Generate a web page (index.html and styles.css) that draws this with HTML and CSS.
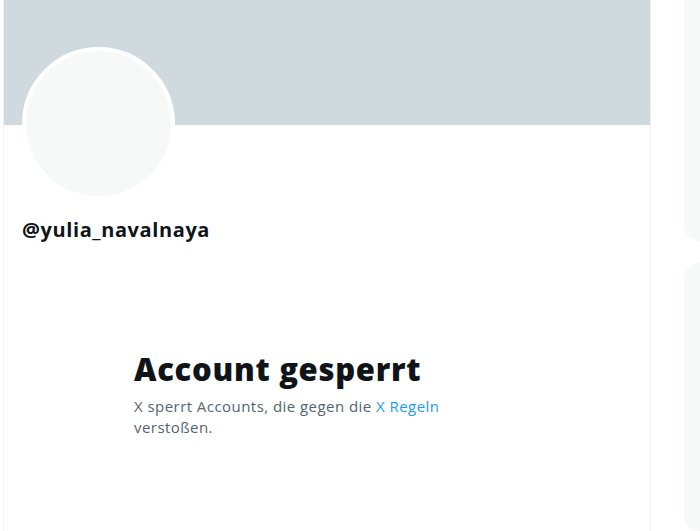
FILE: index.html
```html
<!DOCTYPE html>
<html lang="de">
<head>
  <meta charset="UTF-8" />
  <title>@yulia_navalnaya / X</title>
  <link rel="stylesheet" href="styles.css">
</head>
<body>
  <div class="layout">
    <main class="profile-column">
      <div class="banner"></div>
      <div class="profile-head">
        <div class="avatar"></div>
        <div class="handle">@yulia_navalnaya</div>
      </div>

      <div class="empty-state">
        <h2>Account gesperrt</h2>
        <p>X sperrt Accounts, die gegen die <a href="#">X Regeln</a> verstoßen.</p>
      </div>
    </main>

    <aside class="sidebar">
      <div class="side-box top"></div>
      <div class="side-box"></div>
    </aside>
  </div>
</body>
</html>
```

FILE: styles.css
```css
* {
  box-sizing: border-box;
  margin: 0;
  padding: 0;
}

body {
  background: #fff;
  font-family: 'Open Sans', 'Liberation Sans', sans-serif;
  color: #0f1419;
  overflow: hidden;
}

.layout {
  display: flex;
  padding-left: 3px;
  height: 531px;
}

.profile-column {
  width: 648px;
  flex-shrink: 0;
  border-left: 1px solid #eff3f4;
  border-right: 1px solid #eff3f4;
}

.banner {
  height: 125px;
  background: #cfd9de;
}

.profile-head {
  padding: 0 18px;
}

.avatar {
  width: 153px;
  height: 153px;
  margin-top: -78px;
  border-radius: 50%;
  background: #f7f9f9;
  border: 4px solid #fff;
}

.handle {
  margin-top: 18px;
  font-size: 20px;
  font-weight: 700;
  line-height: 24px;
  letter-spacing: 0.6px;
}

.empty-state {
  margin: 109px 0 0 130px;
  width: 340px;
}

.empty-state h2 {
  font-size: 31px;
  font-weight: 800;
  line-height: 36px;
  letter-spacing: 0.7px;
}

.empty-state p {
  margin-top: 9px;
  font-size: 15px;
  line-height: 21px;
  letter-spacing: 0.45px;
  color: #536471;
}

.empty-state a {
  color: #1d9bf0;
  text-decoration: none;
}

.sidebar {
  margin-left: 33px;
  flex: 1;
  display: flex;
  flex-direction: column;
  gap: 22px;
}

.side-box {
  flex: 1;
  background: #f7f9f9;
  border-radius: 16px 0 0 16px;
}

.side-box.top {
  flex: 0 0 241px;
  border-radius: 0 0 0 16px;
}
```
